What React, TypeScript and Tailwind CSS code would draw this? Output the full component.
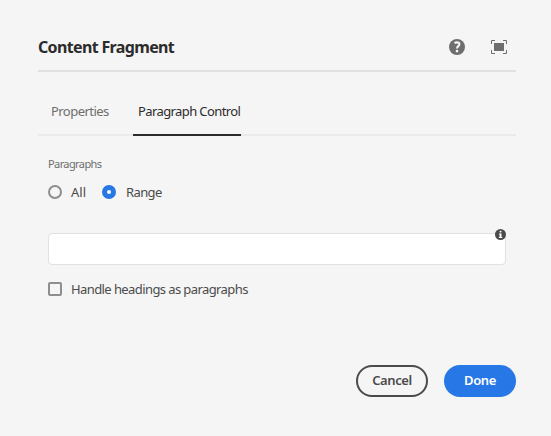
import React from "react";

function HelpIcon() {
  return (
    <svg width="16" height="16" viewBox="0 0 16 16" className="block">
      <circle cx="8" cy="8" r="8" fill="#6e6e6e" />
      <path d="M5.5 4.2C6.3 3.6 7.1 3.4 8 3.4C9.6 3.4 10.4 4.2 10.4 5.3C10.4 7.1 8 7.2 8 9.5" fill="none" stroke="#f5f5f5" strokeWidth="2.1" />
      <circle cx="8" cy="12.1" r="1.35" fill="#f5f5f5" />
    </svg>
  );
}

function FullscreenIcon() {
  return (
    <svg width="16" height="14" viewBox="0 0 16 14" className="block">
      <rect x="3" y="3" width="10" height="8" fill="#6e6e6e" />
      <path d="M.5 4V.5H4M12 .5h3.5V4M15.5 10v3.5H12M4 13.5H.5V10" fill="none" stroke="#6e6e6e" />
    </svg>
  );
}

function InfoIcon() {
  return (
    <svg width="11" height="11" viewBox="0 0 11 11" className="absolute -top-[5.5px] -right-[0.5px] block">
      <circle cx="5.5" cy="5.5" r="5.5" fill="#4b4b4b" />
      <rect x="4.6" y="1.7" width="1.9" height="1.8" rx=".7" fill="#fff" />
      <path d="M4 4.5h2.5v3.4h.7V9H3.9v-1.1h.7V5.5H4z" fill="#fff" />
    </svg>
  );
}

export default function App() {
  return (
    <div className="flex h-[436px] w-[551px] flex-col bg-[#f5f5f5] pr-[35px] pl-[38px] font-['Noto_Sans',sans-serif] whitespace-nowrap text-[#4b4b4b]">
      <header className="flex h-[72px] items-center border-b-2 border-[#e1e1e1] pt-[24px]">
        <h1 className="text-[16px] font-bold tracking-[-0.65px] text-[#2c2c2c]">Content Fragment</h1>
        <div className="ml-auto flex items-center gap-[26px] pr-[9px]">
          <HelpIcon />
          <FullscreenIcon />
        </div>
      </header>

      <nav className="mt-[16px] flex h-[48px] border-b-2 border-[#eaeaea] pl-[13px] text-[13px]">
        <button className="flex h-[48px] w-[82px] items-center tracking-[-0.55px] text-[#6e6e6e]">Properties</button>
        <button className="flex h-[48px] w-[108px] items-center border-b-2 border-[#2c2c2c] pt-[2px] pl-[5px] tracking-[-0.6px] text-[#2c2c2c]">
          Paragraph Control
        </button>
      </nav>

      <main className="pr-[10px] pl-[10px]">
        <div className="mt-[20px] h-[16px] text-[11px] leading-[16px] tracking-[-0.6px] text-[#6e6e6e]">Paragraphs</div>
        <div className="mt-[12px] flex h-[16px] items-center text-[13px]">
          <span className="size-[14px] rounded-full border-2 border-[#8e8e8e]" />
          <span className="ml-[9px] w-[31px] pt-[2px]">All</span>
          <span className="flex size-[14px] items-center justify-center rounded-full bg-[#2777e6]">
            <span className="size-[4px] rounded-full bg-white" />
          </span>
          <span className="ml-[10px] pt-[2px] tracking-[-0.6px]">Range</span>
        </div>
        <div className="relative mt-[33px] h-[32px] rounded-[4px] border border-[#e1e1e1] bg-white">
          <input className="block h-full w-full bg-transparent px-3 text-[13px] outline-none" />
          <InfoIcon />
        </div>
        <label className="mt-[16px] flex h-[16px] items-center text-[13px]">
          <span className="size-[14px] rounded-[2px] border-2 border-[#8e8e8e]" />
          <span className="ml-[9px] pt-[2px] tracking-[-0.59px]">Handle headings as paragraphs</span>
        </label>
      </main>

      <footer className="mt-[68px] flex justify-end gap-[16px] text-[13px] font-semibold">
        <button className="h-[32px] w-[72px] rounded-full border-2 border-[#4b4b4b] tracking-[-0.4px]">Cancel</button>
        <button className="h-[32px] w-[72px] rounded-full bg-[#2777e6] tracking-[-0.4px] text-white">Done</button>
      </footer>
    </div>
  );
}
